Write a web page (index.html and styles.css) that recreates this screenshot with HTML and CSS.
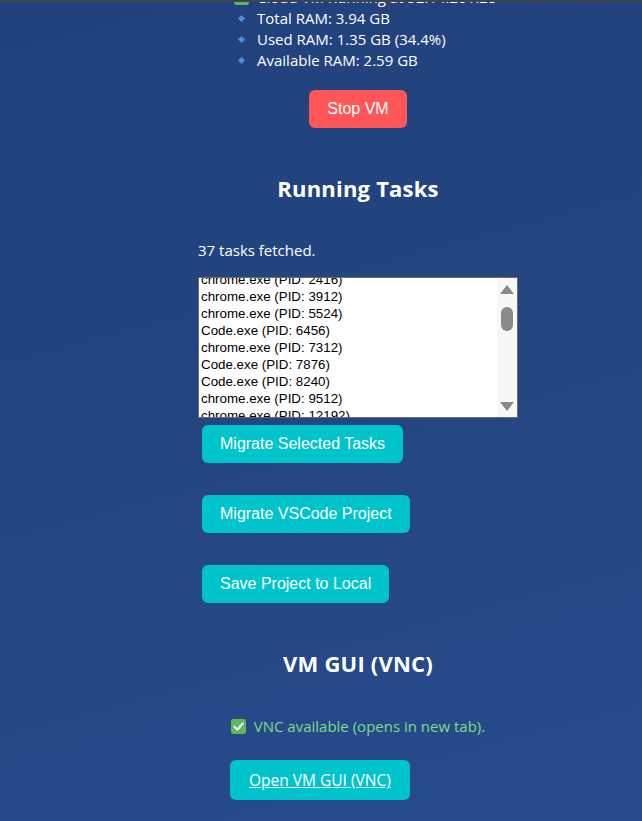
FILE: index.html
```html
<!DOCTYPE html>
<html lang="en">
<head>
<meta charset="utf-8">
<title>Cloud VM</title>
<link rel="stylesheet" href="styles.css">
</head>
<body>
<div class="page">
  <ul class="stats">
    <li class="status"><svg class="check" viewBox="0 0 14 14"><rect width="14" height="14" rx="2" fill="#5cb85c"/><path d="M3.2 7.2 L5.9 9.9 L10.9 4.2" fill="none" stroke="#fff" stroke-width="1.9" stroke-linecap="round" stroke-linejoin="round"/></svg>Cloud VM Running at 52.14.201.28</li>
    <li class="stat">Total RAM: 3.94 GB</li>
    <li class="stat">Used RAM: 1.35 GB (34.4%)</li>
    <li class="stat">Available RAM: 2.59 GB</li>
  </ul>
  <div class="center">
    <button class="btn btn-red">Stop VM</button>
  </div>

  <h2 class="title">Running Tasks</h2>
  <p class="fetched">37 tasks fetched.</p>

  <div class="listbox">
    <div class="options">
      <div class="opt-list">
        <div class="opt">chrome.exe (PID: 2416)</div>
        <div class="opt">chrome.exe (PID: 3912)</div>
        <div class="opt">chrome.exe (PID: 5524)</div>
        <div class="opt">Code.exe (PID: 6456)</div>
        <div class="opt">chrome.exe (PID: 7312)</div>
        <div class="opt">Code.exe (PID: 7876)</div>
        <div class="opt">Code.exe (PID: 8240)</div>
        <div class="opt">chrome.exe (PID: 9512)</div>
        <div class="opt">chrome.exe (PID: 12192)</div>
      </div>
    </div>
    <div class="scrollbar">
      <span class="arrow-up"></span>
      <span class="thumb"></span>
      <span class="track-fill"></span>
      <span class="arrow-down"></span>
    </div>
  </div>

  <div class="actions">
    <button class="btn btn-teal">Migrate Selected Tasks</button>
    <button class="btn btn-teal">Migrate VSCode Project</button>
    <button class="btn btn-teal">Save Project to Local</button>
  </div>

  <h2 class="title title-vnc">VM GUI (VNC)</h2>
  <p class="vnc-ok"><svg class="check" viewBox="0 0 14 14"><rect width="14" height="14" rx="2" fill="#5cb85c"/><path d="M3.2 7.2 L5.9 9.9 L10.9 4.2" fill="none" stroke="#fff" stroke-width="1.9" stroke-linecap="round" stroke-linejoin="round"/></svg>VNC available (opens in new tab).</p>
  <div class="vnc-link-row">
    <a class="btn-link" href="#">Open VM GUI (VNC)</a>
  </div>
</div>
</body>
</html>
```

FILE: styles.css
```css
html, body {
  margin: 0;
  padding: 0;
}

body {
  width: 642px;
  height: 821px;
  overflow: hidden;
  background: linear-gradient(165deg, #21427d 0%, #244680 50%, #284b8c 100%);
  border-top: 2px solid #3f4350;
  box-sizing: border-box;
  font-family: "Open Sans", "Noto Sans", sans-serif;
  color: #ffffff;
}

.page {
  width: 320px;
  margin-left: 198px;
  margin-top: -15px;
}

.stats {
  list-style: none;
  margin: 0;
  padding: 0 0 0 40px;
  font-size: 15px;
  line-height: 21px;
}

.stats li {
  position: relative;
  padding-left: 19px;
  white-space: nowrap;
}

.stats .stat::before {
  content: "";
  position: absolute;
  left: 1px;
  top: 8px;
  width: 5px;
  height: 5px;
  background: #4a8fe0;
  transform: rotate(45deg);
}

.stats .status {
  padding-left: 0;
  margin-left: -4px;
  display: flex;
  align-items: center;
}

.check {
  width: 15px;
  height: 15px;
  flex: none;
  margin-right: 8px;
}

.center {
  display: flex;
  justify-content: center;
  margin-top: 19px;
}

.btn {
  font-family: "Liberation Sans", Arial, sans-serif;
  font-size: 16px;
  line-height: 18px;
  color: #ffffff;
  border: none;
  border-radius: 6px;
  padding: 10px 18px;
  cursor: pointer;
}

.btn-red {
  background: #ff5757;
}

.btn-teal {
  background: #00c4cc;
}

.title {
  margin: 46px 0 0;
  font-size: 22px;
  line-height: 28px;
  letter-spacing: 0.2px;
  font-weight: 700;
  text-align: center;
}

.fetched {
  margin: 38px 0 0;
  font-size: 15px;
  line-height: 21px;
}

.listbox {
  margin-top: 16px;
  height: 141px;
  box-sizing: border-box;
  border: 1px solid #6b6b6b;
  background: #ffffff;
  display: flex;
}

.options {
  flex: 1;
  overflow: hidden;
  padding-left: 2px;
}

.opt-list {
  margin-top: -7px;
}

.opt {
  font-family: "Liberation Sans", Arial, sans-serif;
  font-size: 13.33px;
  line-height: 17px;
  color: #000000;
  white-space: nowrap;
}

.scrollbar {
  width: 20px;
  flex: none;
  background: #f7f7f7;
  display: flex;
  flex-direction: column;
  align-items: center;
  padding: 7px 0 6px;
  box-sizing: border-box;
}

.arrow-up,
.arrow-down {
  width: 0;
  height: 0;
  border-left: 7px solid transparent;
  border-right: 7px solid transparent;
}

.arrow-up {
  border-bottom: 9px solid #8a8a8a;
}

.arrow-down {
  border-top: 9px solid #8a8a8a;
}

.thumb {
  width: 12px;
  height: 24px;
  margin-top: 13px;
  border-radius: 6px;
  background: #8a8a8a;
}

.track-fill {
  flex: 1;
}

.actions {
  margin-top: 7px;
  padding-left: 4px;
  display: flex;
  flex-direction: column;
  align-items: flex-start;
  gap: 32px;
}

.actions .btn {
  height: 38px;
}

.title-vnc {
  margin-top: 46px;
}

.vnc-ok {
  margin: 39px 0 0;
  font-size: 15px;
  line-height: 21px;
  color: #7ddc8c;
  display: flex;
  align-items: center;
  justify-content: center;
  white-space: nowrap;
}

.vnc-link-row {
  margin-top: 23px;
  padding-left: 32px;
  display: flex;
}

.btn-link {
  display: inline-block;
  background: #00c4cc;
  color: #ffffff;
  font-size: 15.5px;
  line-height: 20px;
  padding: 10px 19px;
  border-radius: 6px;
  text-decoration: underline;
}
```
